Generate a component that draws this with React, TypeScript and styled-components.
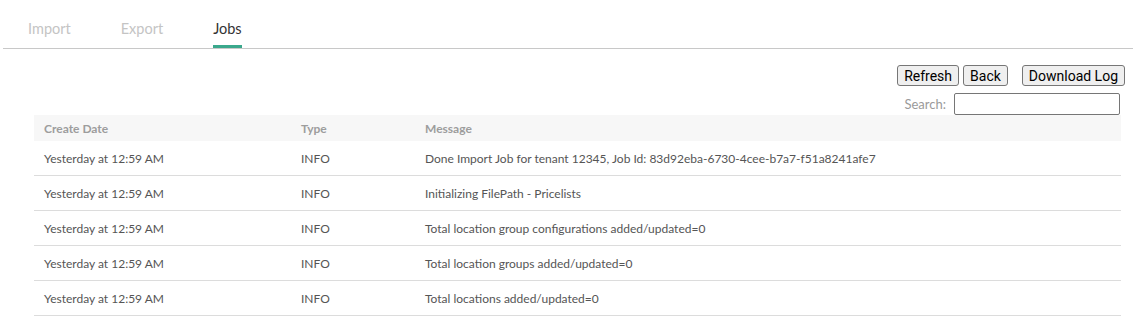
import * as React from 'react'
import styled, { createGlobalStyle } from 'styled-components'

const GlobalStyle = createGlobalStyle`
  body {
    margin: 0;
    background: #fff;
    font-family: "Lato", "Noto Sans", sans-serif;
  }
`

const Page = styled.div`
  padding: 0 0 0 3px;
`

const TabBar = styled.div`
  display: flex;
  border-bottom: 1px solid #c8c8c8;
  height: 49px;
  box-sizing: border-box;
`

const Tab = styled.div<{ $active?: boolean }>`
  padding: 20px 25px 0;
  line-height: 18px;
  font-size: 14.5px;
  color: ${p => (p.$active ? '#333' : '#c4c4c4')};
  position: relative;

  &::after {
    content: '';
    display: ${p => (p.$active ? 'block' : 'none')};
    position: absolute;
    left: 25px;
    right: 25px;
    bottom: 0;
    height: 3px;
    background: #3aa88c;
  }
`

const Toolbar = styled.div`
  display: flex;
  justify-content: flex-end;
  padding: 16px 8px 0 0;
  gap: 4px;
`

const Button = styled.button<{ $gapLeft?: number }>`
  font-family: Roboto, sans-serif;
  font-size: 14px;
  height: 21px;
  padding: 0 6px;
  background: #efefef;
  border: 1px solid #767676;
  border-radius: 3px;
  color: #000;
  margin-left: ${p => p.$gapLeft ?? 0}px;
`

const Content = styled.div`
  margin: 0 12px 0 31px;
`

const SearchRow = styled.div`
  display: flex;
  justify-content: flex-end;
  align-items: center;
  gap: 8px;
  margin-top: 6px;
  height: 23px;
`

const SearchLabel = styled.label`
  font-size: 13px;
  color: #9a9a9a;
`

const SearchInput = styled.input`
  width: 166px;
  height: 22px;
  box-sizing: border-box;
  border: 1px solid #767676;
  border-radius: 2px;
  margin-right: 1px;
`

const Table = styled.table`
  width: 100%;
  border-collapse: collapse;
  table-layout: fixed;
  font-size: 12px;
`

const Col = styled.col<{ $width?: number }>`
  width: ${p => (p.$width ? `${p.$width}px` : 'auto')};
`

const HeadCell = styled.th`
  background: #f7f7f7;
  color: #9d9d9d;
  font-weight: bold;
  text-align: left;
  height: 26px;
  padding: 0 10px;
`

const Row = styled.tr`
  border-bottom: 1px solid #dcdcdc;
`

const Cell = styled.td`
  height: 34px;
  padding: 0 10px;
  color: #555;
  white-space: nowrap;
`

const rows = [
  'Done Import Job for tenant 12345, Job Id: 83d92eba-6730-4cee-b7a7-f51a8241afe7',
  'Initializing FilePath - Pricelists',
  'Total location group configurations added/updated=0',
  'Total location groups added/updated=0',
  'Total locations added/updated=0',
]

export default function App() {
  return (
    <Page>
      <GlobalStyle />
      <TabBar>
        <Tab>Import</Tab>
        <Tab>Export</Tab>
        <Tab $active>Jobs</Tab>
      </TabBar>
      <Toolbar>
        <Button>Refresh</Button>
        <Button>Back</Button>
        <Button $gapLeft={10}>Download Log</Button>
      </Toolbar>
      <Content>
        <SearchRow>
          <SearchLabel>Search:</SearchLabel>
          <SearchInput type="text" />
        </SearchRow>
        <Table>
          <colgroup>
            <Col $width={257} />
            <Col $width={124} />
            <Col />
          </colgroup>
          <thead>
            <tr>
              <HeadCell>Create Date</HeadCell>
              <HeadCell>Type</HeadCell>
              <HeadCell>Message</HeadCell>
            </tr>
          </thead>
          <tbody>
            {rows.map(msg => (
              <Row key={msg}>
                <Cell>Yesterday at 12:59 AM</Cell>
                <Cell>INFO</Cell>
                <Cell>{msg}</Cell>
              </Row>
            ))}
          </tbody>
        </Table>
      </Content>
    </Page>
  )
}
